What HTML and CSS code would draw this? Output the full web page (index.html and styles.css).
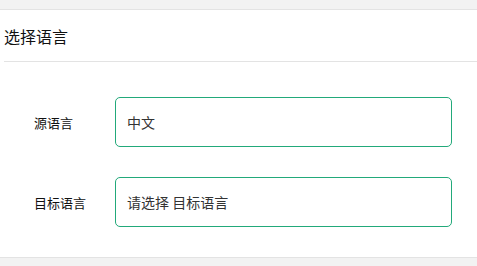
FILE: index.html
```html
<!DOCTYPE html>
<html lang="zh-CN">
<head>
<meta charset="utf-8">
<link rel="stylesheet" href="styles.css">
</head>
<body>
<div class="card">
  <div class="card-header">选择语言</div>
  <div class="form">
    <div class="row">
      <div class="label">源语言</div>
      <div class="field">中文</div>
    </div>
    <div class="row">
      <div class="label">目标语言</div>
      <div class="field placeholder">请选择 目标语言</div>
    </div>
  </div>
</div>
</body>
</html>
```
FILE: styles.css
```css
html, body {
  margin: 0;
  padding: 0;
}
body {
  background: #f2f2f2;
  font-family: "Noto Sans CJK SC", "Noto Sans", sans-serif;
  width: 477px;
  height: 266px;
  overflow: hidden;
}
.card {
  margin-top: 9px;
  background: #fff;
  border-top: 1px solid #e3e3e3;
  border-bottom: 1px solid #e3e3e3;
  height: 247px;
}
.card-header {
  margin-left: 4px;
  height: 51px;
  border-bottom: 1px solid #e3e3e3;
  font-size: 16px;
  line-height: 52px;
  color: #111;
}
.form {
  padding: 35px 25px 0 34px;
  display: flex;
  flex-direction: column;
  gap: 30px;
}
.row {
  display: grid;
  grid-template-columns: 81px 1fr;
  align-items: center;
}
.label {
  font-size: 13px;
  color: #111;
}
.field {
  height: 48px;
  border: 1px solid #22a97a;
  border-radius: 5px;
  padding-left: 11px;
  display: flex;
  align-items: center;
  font-size: 14px;
  color: #333;
}
```
